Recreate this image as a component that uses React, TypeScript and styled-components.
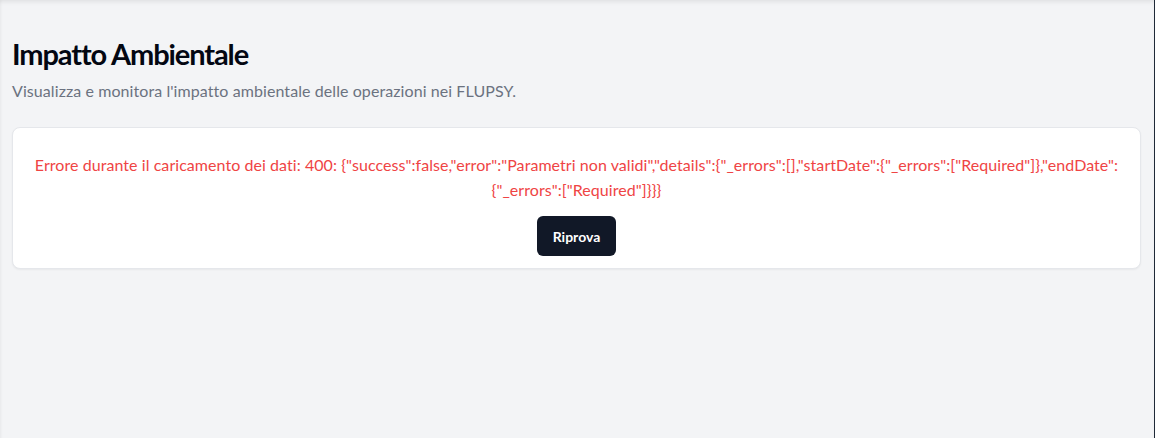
import React from 'react';
import styled, { createGlobalStyle } from 'styled-components';

const GlobalStyle = createGlobalStyle`
  html, body {
    margin: 0;
    padding: 0;
    background: #f3f4f6;
  }
  body {
    font-family: 'Segoe UI', Lato, 'Noto Sans', sans-serif;
  }
  * {
    box-sizing: border-box;
  }
`;

const Page = styled.main`
  min-height: 438px;
  padding: 36px 13px 24px 12px;
  background: #f3f4f6;
  border-right: 1px solid #1f2937;
  box-shadow: inset 0 4px 4px -2px rgba(0, 0, 0, 0.08),
    inset 3px 0 3px -2px rgba(0, 0, 0, 0.04);
`;

const Title = styled.h1`
  margin: 0;
  font-size: 29px;
  line-height: 36px;
  font-weight: 700;
  letter-spacing: -1.1px;
  color: #030712;
`;

const Subtitle = styled.p`
  margin: 7px 0 0;
  font-size: 16px;
  line-height: 24px;
  letter-spacing: 0.08px;
  color: #6b7280;
`;

const Card = styled.section`
  margin-top: 24px;
  background: #ffffff;
  border: 1px solid #e5e7eb;
  border-radius: 8px;
  box-shadow: 0 1px 2px rgba(0, 0, 0, 0.05);
  padding: 24px 16px 12px;
  display: flex;
  flex-direction: column;
  align-items: center;
`;

const ErrorText = styled.p`
  margin: 0 0 14px;
  text-align: center;
  font-size: 16px;
  line-height: 25px;
  letter-spacing: 0.06px;
  color: #ef4444;
`;

const RetryButton = styled.button`
  height: 40px;
  padding: 0 16px;
  border: none;
  border-radius: 6px;
  background: #111827;
  color: #ffffff;
  font-family: inherit;
  font-size: 14px;
  font-weight: 700;
  cursor: pointer;
`;

const errorMessage =
  'Errore durante il caricamento dei dati: 400: {"success":false,"error":"Parametri non validi","details":{"_errors":[],"startDate":{"_errors":["Required"]},"endDate":{"_errors":["Required"]}}}';

const App: React.FC = () => {
  return (
    <>
      <GlobalStyle />
      <Page>
        <Title>Impatto Ambientale</Title>
        <Subtitle>Visualizza e monitora l'impatto ambientale delle operazioni nei FLUPSY.</Subtitle>
        <Card>
          <ErrorText>{errorMessage}</ErrorText>
          <RetryButton onClick={() => window.location.reload()}>Riprova</RetryButton>
        </Card>
      </Page>
    </>
  );
};

export default App;
